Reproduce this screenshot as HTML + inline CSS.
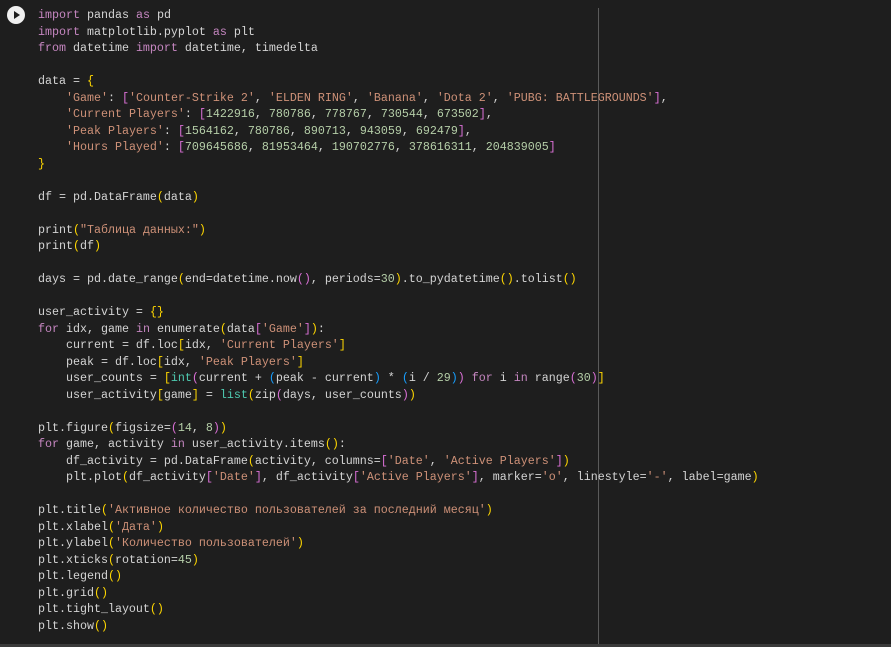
<!DOCTYPE html>
<html><head><meta charset="utf-8"><style>
html,body{margin:0;padding:0;background:#1e1e1e;width:891px;height:647px;overflow:hidden}
pre{position:absolute;left:38px;top:7px;margin:0;font-family:"Liberation Mono","DejaVu Sans Mono",monospace;font-size:11.67px;line-height:16.5px;color:#d4d4d4}
.k{color:#c586c0}.s{color:#ce9178}.n{color:#b5cea8}.a{color:#ffd700}.b{color:#da70d6}.c{color:#179fff}.t{color:#4ec9b0}
.ruler{position:absolute;left:598px;top:8px;width:1px;height:636px;background:#5a5a5a}
.bottom{position:absolute;left:0;top:644px;width:891px;height:3px;background:#3a3a3a}
.play{position:absolute;left:7px;top:6px;width:18px;height:18px;border-radius:50%;background:#f0f0f0}
.play:after{content:"";position:absolute;left:7px;top:5px;border-left:6px solid #1e1e1e;border-top:4px solid transparent;border-bottom:4px solid transparent}
</style></head><body>
<div class="play"></div>
<div class="ruler"></div>
<div class="bottom"></div>
<pre><span class="k">import</span> pandas <span class="k">as</span> pd
<span class="k">import</span> matplotlib.pyplot <span class="k">as</span> plt
<span class="k">from</span> datetime <span class="k">import</span> datetime, timedelta

data = <span class="a">{</span>
    <span class="s">'Game'</span>: <span class="b">[</span><span class="s">'Counter-Strike 2'</span>, <span class="s">'ELDEN RING'</span>, <span class="s">'Banana'</span>, <span class="s">'Dota 2'</span>, <span class="s">'PUBG: BATTLEGROUNDS'</span><span class="b">]</span>,
    <span class="s">'Current Players'</span>: <span class="b">[</span><span class="n">1422916</span>, <span class="n">780786</span>, <span class="n">778767</span>, <span class="n">730544</span>, <span class="n">673502</span><span class="b">]</span>,
    <span class="s">'Peak Players'</span>: <span class="b">[</span><span class="n">1564162</span>, <span class="n">780786</span>, <span class="n">890713</span>, <span class="n">943059</span>, <span class="n">692479</span><span class="b">]</span>,
    <span class="s">'Hours Played'</span>: <span class="b">[</span><span class="n">709645686</span>, <span class="n">81953464</span>, <span class="n">190702776</span>, <span class="n">378616311</span>, <span class="n">204839005</span><span class="b">]</span>
<span class="a">}</span>

df = pd.DataFrame<span class="a">(</span>data<span class="a">)</span>

print<span class="a">(</span><span class="s">"Таблица данных:"</span><span class="a">)</span>
print<span class="a">(</span>df<span class="a">)</span>

days = pd.date_range<span class="a">(</span>end=datetime.now<span class="b">()</span>, periods=<span class="n">30</span><span class="a">)</span>.to_pydatetime<span class="a">()</span>.tolist<span class="a">()</span>

user_activity = <span class="a">{}</span>
<span class="k">for</span> idx, game <span class="k">in</span> enumerate<span class="a">(</span>data<span class="b">[</span><span class="s">'Game'</span><span class="b">]</span><span class="a">)</span>:
    current = df.loc<span class="a">[</span>idx, <span class="s">'Current Players'</span><span class="a">]</span>
    peak = df.loc<span class="a">[</span>idx, <span class="s">'Peak Players'</span><span class="a">]</span>
    user_counts = <span class="a">[</span><span class="t">int</span><span class="b">(</span>current + <span class="c">(</span>peak - current<span class="c">)</span> * <span class="c">(</span>i / <span class="n">29</span><span class="c">)</span><span class="b">)</span> <span class="k">for</span> i <span class="k">in</span> range<span class="b">(</span><span class="n">30</span><span class="b">)</span><span class="a">]</span>
    user_activity<span class="a">[</span>game<span class="a">]</span> = <span class="t">list</span><span class="a">(</span>zip<span class="b">(</span>days, user_counts<span class="b">)</span><span class="a">)</span>

plt.figure<span class="a">(</span>figsize=<span class="b">(</span><span class="n">14</span>, <span class="n">8</span><span class="b">)</span><span class="a">)</span>
<span class="k">for</span> game, activity <span class="k">in</span> user_activity.items<span class="a">()</span>:
    df_activity = pd.DataFrame<span class="a">(</span>activity, columns=<span class="b">[</span><span class="s">'Date'</span>, <span class="s">'Active Players'</span><span class="b">]</span><span class="a">)</span>
    plt.plot<span class="a">(</span>df_activity<span class="b">[</span><span class="s">'Date'</span><span class="b">]</span>, df_activity<span class="b">[</span><span class="s">'Active Players'</span><span class="b">]</span>, marker=<span class="s">'o'</span>, linestyle=<span class="s">'-'</span>, label=game<span class="a">)</span>

plt.title<span class="a">(</span><span class="s">'Активное количество пользователей за последний месяц'</span><span class="a">)</span>
plt.xlabel<span class="a">(</span><span class="s">'Дата'</span><span class="a">)</span>
plt.ylabel<span class="a">(</span><span class="s">'Количество пользователей'</span><span class="a">)</span>
plt.xticks<span class="a">(</span>rotation=<span class="n">45</span><span class="a">)</span>
plt.legend<span class="a">()</span>
plt.grid<span class="a">()</span>
plt.tight_layout<span class="a">()</span>
plt.show<span class="a">()</span></pre>
</body></html>
